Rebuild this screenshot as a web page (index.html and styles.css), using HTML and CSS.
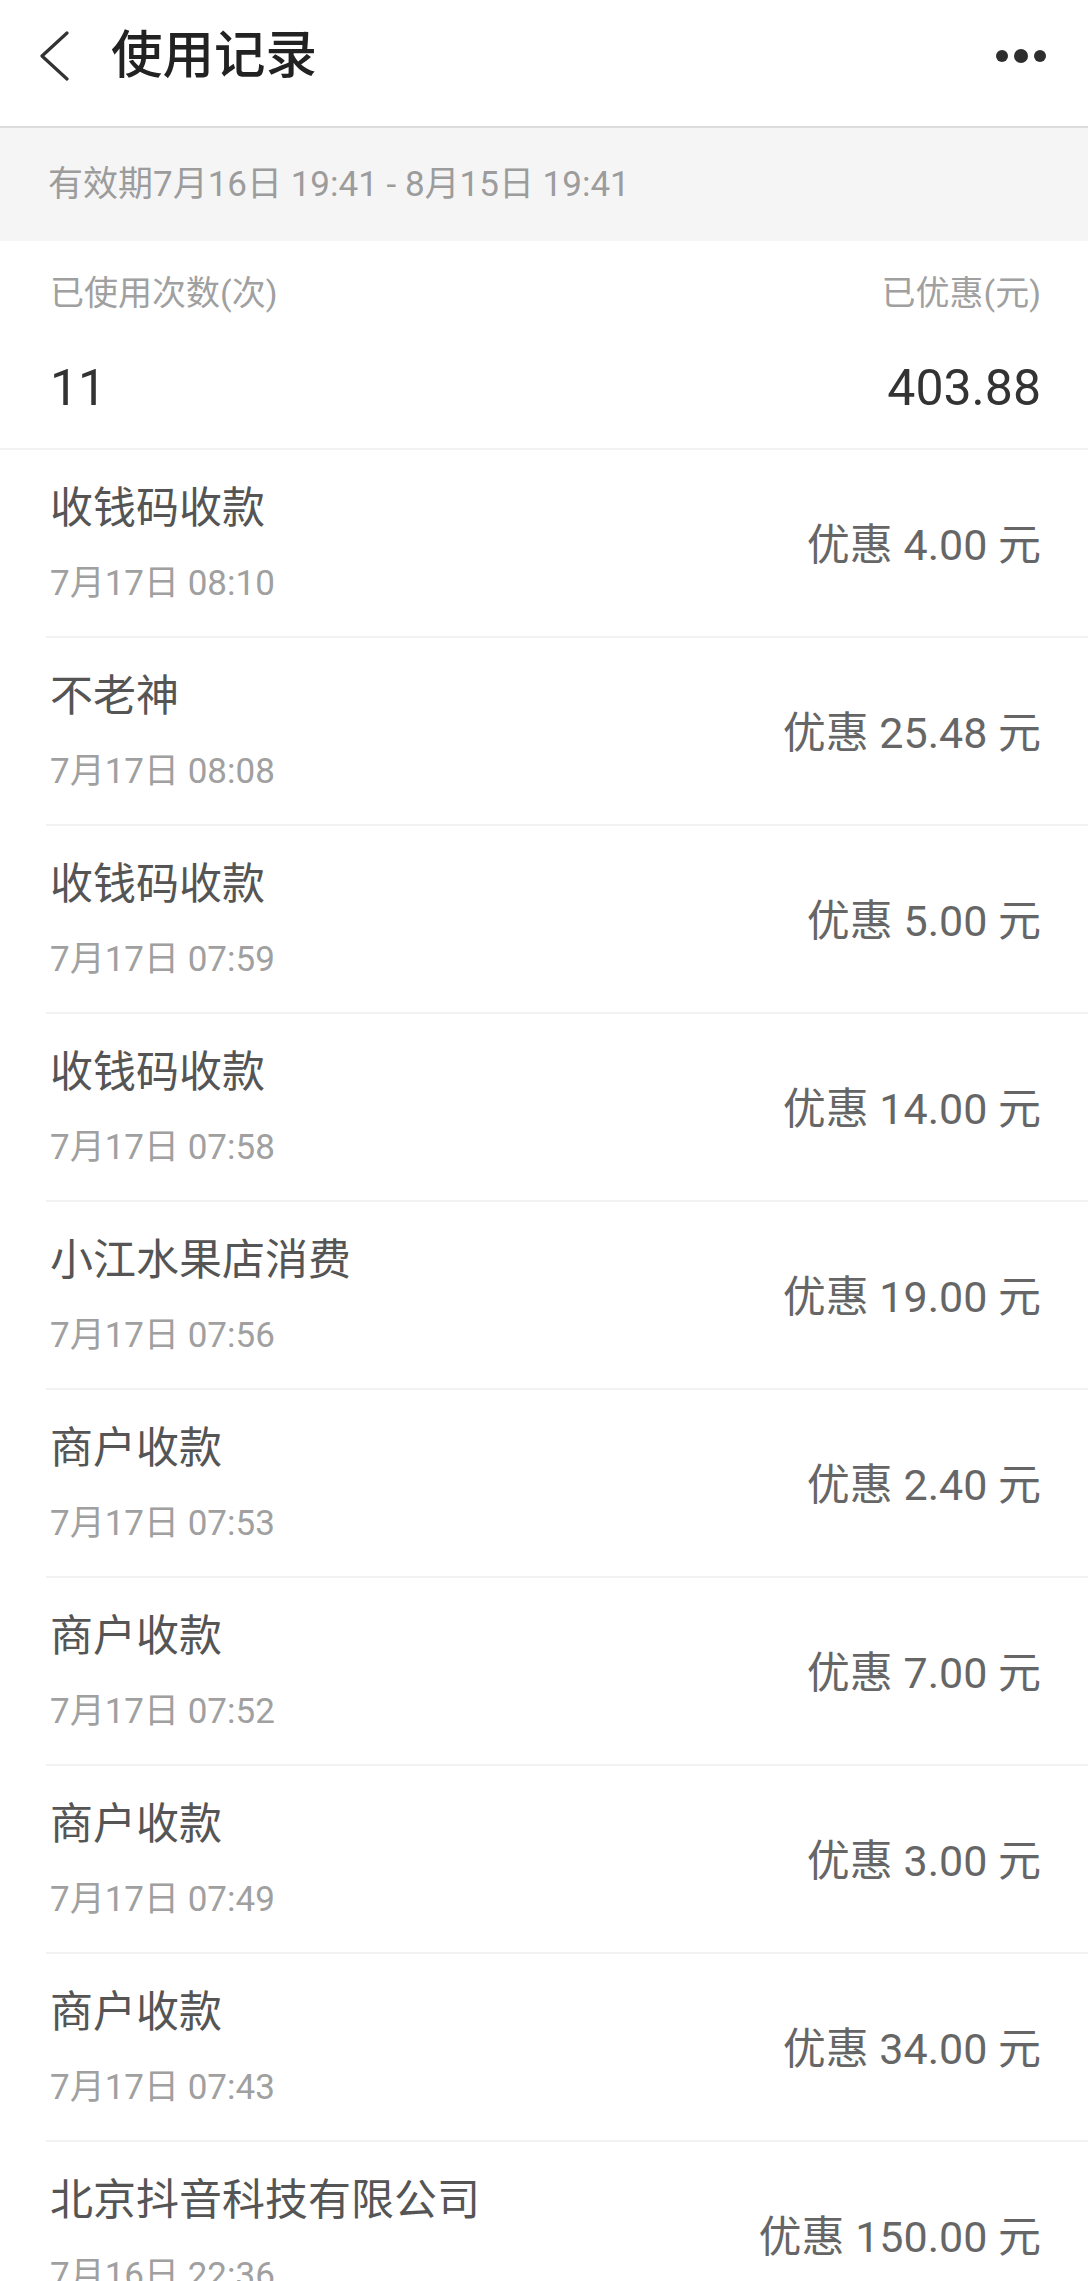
FILE: index.html
```html
<!DOCTYPE html>
<html lang="zh-CN">
<head>
  <meta charset="UTF-8" />
  <title>使用记录</title>
  <meta name="viewport" content="width=device-width, initial-scale=1" />
  <link rel="stylesheet" href="styles.css">
</head>
<body>
  <header class="top-bar">
    <svg class="back" width="32" height="50" viewBox="0 0 32 50">
      <path d="M29 2 L4 25 L29 48" fill="none" stroke="#333" stroke-width="3.2" stroke-linecap="round" stroke-linejoin="round" />
    </svg>
    <h1>使用记录</h1>
    <div class="more">
      <span class="dot"></span>
      <span class="dot big"></span>
      <span class="dot"></span>
    </div>
  </header>

  <div class="validity">有效期7月16日 19:41 - 8月15日 19:41</div>

  <section class="summary">
    <div class="summary-row labels">
      <span>已使用次数(次)</span>
      <span>已优惠(元)</span>
    </div>
    <div class="summary-row values">
      <span>11</span>
      <span>403.88</span>
    </div>
  </section>

  <ul class="records">
    <li class="record">
      <div class="info">
        <div class="name">收钱码收款</div>
        <div class="time">7月17日 08:10</div>
      </div>
      <div class="amount">优惠 4.00 元</div>
    </li>
    <li class="record">
      <div class="info">
        <div class="name">不老神</div>
        <div class="time">7月17日 08:08</div>
      </div>
      <div class="amount">优惠 25.48 元</div>
    </li>
    <li class="record">
      <div class="info">
        <div class="name">收钱码收款</div>
        <div class="time">7月17日 07:59</div>
      </div>
      <div class="amount">优惠 5.00 元</div>
    </li>
    <li class="record">
      <div class="info">
        <div class="name">收钱码收款</div>
        <div class="time">7月17日 07:58</div>
      </div>
      <div class="amount">优惠 14.00 元</div>
    </li>
    <li class="record">
      <div class="info">
        <div class="name">小江水果店消费</div>
        <div class="time">7月17日 07:56</div>
      </div>
      <div class="amount">优惠 19.00 元</div>
    </li>
    <li class="record">
      <div class="info">
        <div class="name">商户收款</div>
        <div class="time">7月17日 07:53</div>
      </div>
      <div class="amount">优惠 2.40 元</div>
    </li>
    <li class="record">
      <div class="info">
        <div class="name">商户收款</div>
        <div class="time">7月17日 07:52</div>
      </div>
      <div class="amount">优惠 7.00 元</div>
    </li>
    <li class="record">
      <div class="info">
        <div class="name">商户收款</div>
        <div class="time">7月17日 07:49</div>
      </div>
      <div class="amount">优惠 3.00 元</div>
    </li>
    <li class="record">
      <div class="info">
        <div class="name">商户收款</div>
        <div class="time">7月17日 07:43</div>
      </div>
      <div class="amount">优惠 34.00 元</div>
    </li>
    <li class="record">
      <div class="info">
        <div class="name">北京抖音科技有限公司</div>
        <div class="time">7月16日 22:36</div>
      </div>
      <div class="amount">优惠 150.00 元</div>
    </li>
  </ul>
</body>
</html>
```

FILE: styles.css
```css
* {
  box-sizing: border-box;
}

body {
  margin: 0;
  padding: 0;
  font-family: Roboto, "Noto Sans CJK SC", sans-serif;
  background: #ffffff;
  color: #333;
  overflow: hidden;
}

.top-bar {
  display: flex;
  align-items: center;
  height: 128px;
  padding: 0 42px 14px 38px;
  border-bottom: 2px solid #dcdcdc;
}

.back {
  display: block;
  flex-shrink: 0;
}

.top-bar h1 {
  margin: 0 0 0 41px;
  font-size: 51.5px;
  font-weight: 500;
  line-height: 60px;
  color: #222;
  flex: 1;
}

.more {
  display: flex;
  align-items: center;
  gap: 6px;
}

.dot {
  width: 12px;
  height: 12px;
  border-radius: 50%;
  background: #2e2e2e;
}

.dot.big {
  width: 14px;
  height: 14px;
}

.validity {
  height: 113px;
  padding: 0 0 8px 48px;
  display: flex;
  align-items: center;
  background: #f5f5f5;
  color: #9c9c9c;
  font-size: 35px;
}

.summary {
  padding: 25px 47px 30px 50px;
  border-bottom: 2px solid #f2f2f2;
}

.summary-row {
  display: flex;
  justify-content: space-between;
  align-items: center;
}

.summary-row.labels {
  height: 48px;
  font-size: 34px;
  color: #a0a0a0;
}

.summary-row.values {
  height: 60px;
  margin-top: 44px;
  font-size: 50px;
  color: #333;
}

.records {
  list-style: none;
  margin: 0;
  padding: 0 0 0 46px;
}

.record {
  display: flex;
  justify-content: space-between;
  align-items: center;
  padding: 28px 47px 28px 4px;
  border-bottom: 2px solid #f2f2f2;
}

.name {
  height: 60px;
  line-height: 60px;
  font-size: 43px;
  color: #555;
}

.time {
  height: 48px;
  line-height: 48px;
  margin-top: 22px;
  font-size: 35px;
  color: #a0a0a0;
}

.amount {
  font-size: 43px;
  color: #666;
  margin-top: -4px;
}
```
